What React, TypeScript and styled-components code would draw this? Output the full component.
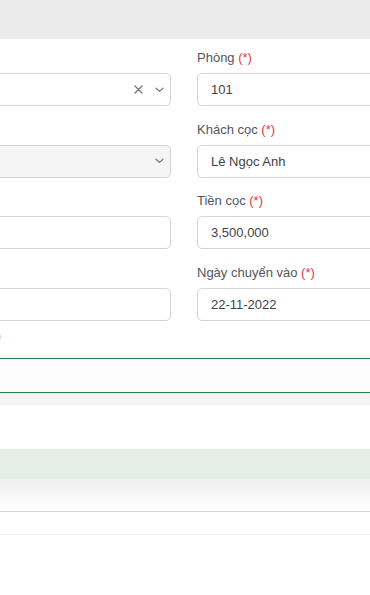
import React from "react";
import styled, { createGlobalStyle } from "styled-components";

const Global = createGlobalStyle`
  html, body { margin: 0; padding: 0; background: #ffffff; overflow: hidden; }
  body { font-family: "Liberation Sans", Arial, sans-serif; width: 370px; }
  * { box-sizing: border-box; }
`;

const Page = styled.div`
  width: 370px;
  overflow: hidden;
`;

const TopBar = styled.div`
  height: 39px;
  background: #ebebeb;
`;

const FormSection = styled.div`
  padding-top: 9px;
`;

const Grid = styled.div`
  width: 768px;
  margin-left: -200px;
  display: grid;
  grid-template-columns: 1fr 1fr;
`;

const Column = styled.div`
  padding: 0 13px;
  display: flex;
  flex-direction: column;
`;

const Field = styled.div`
  display: flex;
  flex-direction: column;
  margin-bottom: 13.5px;
`;

const Label = styled.label`
  height: 20px;
  font-size: 13px;
  line-height: 20px;
  color: #545460;
  margin-bottom: 5px;
`;

const Req = styled.span`
  color: #e8363f;
`;

const InputBox = styled.div<{ $disabled?: boolean }>`
  height: 33px;
  border: 1px solid #d4d3db;
  border-radius: 5px;
  background: ${(p) => (p.$disabled ? "#f5f5f6" : "#ffffff")};
  padding: 0 5px 0 13px;
  display: flex;
  align-items: center;
  font-size: 13px;
  color: #3f3f4a;
`;

const Value = styled.span`
  flex: 1;
`;

const IconSlot = styled.span`
  display: inline-flex;
  align-items: center;
  justify-content: center;
  width: 12px;
  height: 12px;
  margin-left: 9px;
  color: #72727d;
`;

const Note = styled.div`
  height: 16px;
  font-size: 11.6px;
  line-height: 16px;
  color: #f07d7d;
  margin-top: -6px;
  white-space: nowrap;
`;

const GreenBand = styled.div`
  margin-top: 14px;
  height: 35px;
  border-top: 1px solid #23853f;
  border-bottom: 1px solid #23853f;
  background: #fcfcfc;
`;

const ShadowBand = styled.div`
  height: 12px;
  background: linear-gradient(#f2f2f2, #f5f5f5);
  border-bottom: 1px solid #f0f0f0;
`;

const Spacer = styled.div<{ $h: number }>`
  height: ${(p) => p.$h}px;
`;

const TableHead = styled.div`
  height: 30px;
  background: #e4eee7;
`;

const FadeRow = styled.div`
  height: 33px;
  background: linear-gradient(#efefef, #ffffff);
  border-bottom: 1px solid #d2d1da;
`;

const Row = styled.div`
  height: 23px;
  border-bottom: 1px solid #efefef;
`;

const Cross = () => (
  <svg width="9" height="9" viewBox="0 0 9 9" fill="none">
    <path d="M1 1L8 8M8 1L1 8" stroke="currentColor" strokeWidth="1.3" strokeLinecap="round" />
  </svg>
);

const Chevron = () => (
  <svg width="9" height="6" viewBox="0 0 9 6" fill="none">
    <path d="M1 1.2L4.5 4.4L8 1.2" stroke="currentColor" strokeWidth="1.2" strokeLinecap="round" strokeLinejoin="round" />
  </svg>
);

const App: React.FC = () => (
  <Page>
    <Global />
    <TopBar />
    <FormSection>
      <Grid>
        <Column>
          <Field>
            <Label />
            <InputBox>
              <Value />
              <IconSlot>
                <Cross />
              </IconSlot>
              <IconSlot>
                <Chevron />
              </IconSlot>
            </InputBox>
          </Field>
          <Field>
            <Label />
            <InputBox $disabled>
              <Value />
              <IconSlot>
                <Chevron />
              </IconSlot>
            </InputBox>
          </Field>
          <Field>
            <Label />
            <InputBox>
              <Value />
            </InputBox>
          </Field>
          <Field>
            <Label />
            <InputBox>
              <Value />
            </InputBox>
          </Field>
          <Note>Các trường có dấu (*) là bắt buộc (*)</Note>
        </Column>
        <Column>
          <Field>
            <Label>
              Phòng <Req>(*)</Req>
            </Label>
            <InputBox>
              <Value>101</Value>
            </InputBox>
          </Field>
          <Field>
            <Label>
              Khách cọc <Req>(*)</Req>
            </Label>
            <InputBox>
              <Value>Lê Ngọc Anh</Value>
            </InputBox>
          </Field>
          <Field>
            <Label>
              Tiền cọc <Req>(*)</Req>
            </Label>
            <InputBox>
              <Value>3,500,000</Value>
            </InputBox>
          </Field>
          <Field>
            <Label>
              Ngày chuyển vào <Req>(*)</Req>
            </Label>
            <InputBox>
              <Value>22-11-2022</Value>
            </InputBox>
          </Field>
        </Column>
      </Grid>
    </FormSection>
    <GreenBand />
    <ShadowBand />
    <Spacer $h={44} />
    <TableHead />
    <FadeRow />
    <Row />
  </Page>
);

export default App;
